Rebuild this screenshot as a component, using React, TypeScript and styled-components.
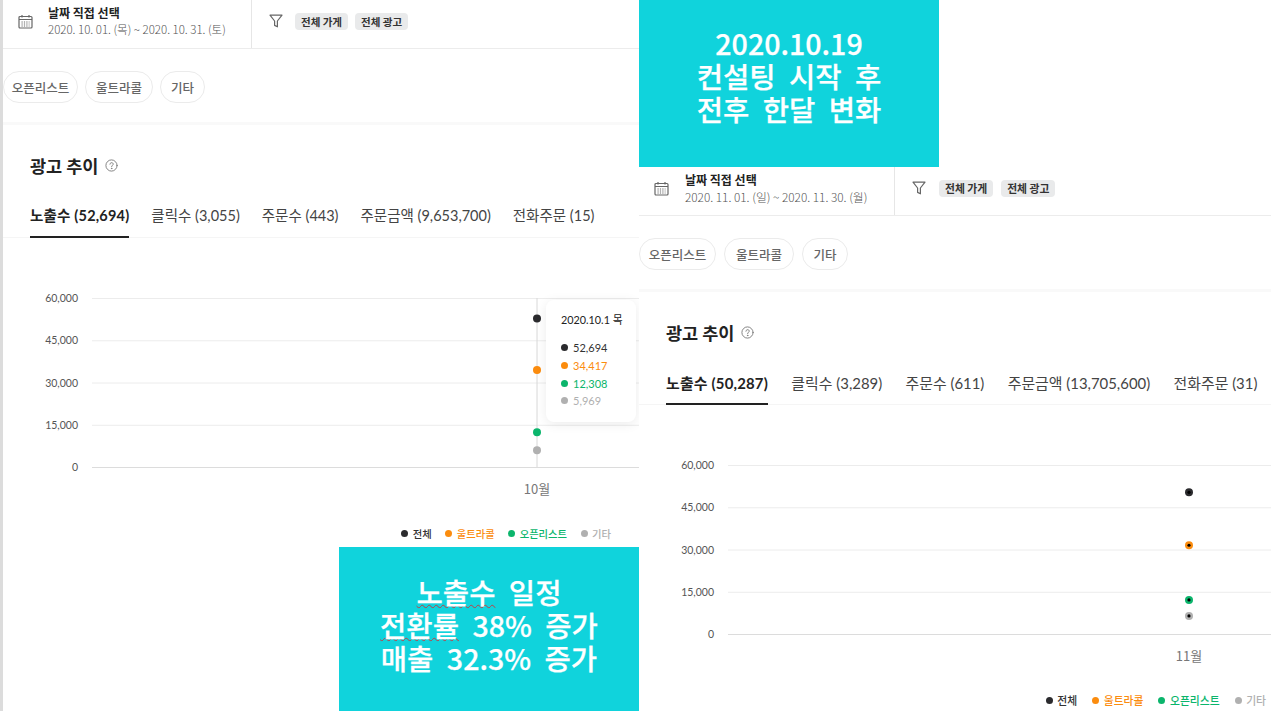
import styled, { createGlobalStyle } from 'styled-components';

const GlobalStyle = createGlobalStyle`
    html, body {
        margin: 0;
        padding: 0;
        background: #fff;
    }
    * {
        box-sizing: border-box;
    }
`;

const FONT = `Lato, "Noto Sans CJK KR", sans-serif`;
const KR = `"Noto Sans CJK KR", sans-serif`;

const BLACK = '#2b2b2e';
const ORANGE = '#fb8c0e';
const GREEN = '#0bb56c';
const GRAY = '#b0b0b0';

const Page = styled.div`
    display: flex;
    width: 1271px;
    height: 711px;
    overflow: hidden;
    background: #fff;
    font-family: ${FONT};
`;

const LeftColumn = styled.div`
    position: relative;
    flex: 0 0 639px;
    height: 711px;
    overflow: hidden;
    border-left: 3px solid #dcdcdc;
`;

const RightColumn = styled.div`
    flex: 1;
    min-width: 0;
    display: flex;
    flex-direction: column;
`;

const Callout = styled.div<{ $float?: boolean }>`
    ${(p) =>
        p.$float
            ? 'position: absolute; right: 0; bottom: 0; height: 164px; padding-bottom: 10px;'
            : 'flex: 0 0 167px; padding-bottom: 16px;'}
    width: 300px;
    display: flex;
    flex-direction: column;
    align-items: center;
    justify-content: center;
    background: #10d3dc;
    color: #fff;
    font-family: ${KR};
    font-size: 28.6px;
    font-weight: 500;
    -webkit-text-stroke: 0.25px #fff;
    line-height: 33px;
    word-spacing: 7px;
    white-space: nowrap;
`;

const Misspelt = styled.span`
    text-decoration: underline wavy #bd3f45 1px;
    text-underline-offset: 0;
    text-decoration-skip-ink: none;
`;

const Report = styled.section`
    color: #222;
`;

const HeaderBar = styled.div`
    display: flex;
    align-items: stretch;
    height: 49px;
    border-bottom: 1px solid #ececec;
`;

const DateBox = styled.div<{ $width: number }>`
    display: flex;
    align-items: center;
    flex: 0 0 ${(p) => p.$width}px;
    padding: 0 0 6px 15px;
    border-right: 1px solid #e6e6e6;
    color: #666;
`;

const DateText = styled.div<{ $inset: number }>`
    margin-left: ${(p) => p.$inset}px;
`;

const DateTitle = styled.div`
    font-family: ${KR};
    font-size: 12px;
    font-weight: 700;
    line-height: 16px;
    color: #222;
`;

const DateRange = styled.div<{ $size: number }>`
    font-family: ${KR};
    font-size: ${(p) => p.$size}px;
    font-weight: 300;
    line-height: 17px;
    color: #555;
    white-space: nowrap;
`;

const FilterBox = styled.div<{ $gap: number }>`
    display: flex;
    align-items: center;
    gap: ${(p) => p.$gap}px;
    padding: 0 0 6px 17px;
    color: #666;
    svg {
        margin-right: 5px;
    }
`;

const Badge = styled.span<{ $size: number }>`
    display: inline-flex;
    align-items: center;
    height: 17px;
    padding: 0 6px;
    border-radius: 4px;
    background: #e9eaeb;
    font-family: ${KR};
    font-size: ${(p) => p.$size}px;
    font-weight: 700;
    color: #333;
    white-space: nowrap;
`;

const ChipRow = styled.div<{ $gap: number }>`
    display: flex;
    gap: ${(p) => p.$gap}px;
    height: 76px;
    padding-top: 22px;
    border-bottom: 3px solid #f9f9f9;
`;

const Chip = styled.span<{ $width: number }>`
    display: inline-flex;
    align-items: center;
    justify-content: center;
    width: ${(p) => p.$width}px;
    height: 32px;
    border: 1px solid #ebebeb;
    border-radius: 16px;
    font-family: ${KR};
    font-size: 12.5px;
    font-weight: 500;
    color: #666;
`;

const TitleRow = styled.div`
    display: flex;
    align-items: center;
    gap: 7px;
    height: 24px;
    margin: 28px 0 19px 27px;
    font-family: ${KR};
    font-size: 17.5px;
    font-weight: 700;
    color: #222;
    svg {
        color: #777;
    }
`;

const TabRow = styled.div<{ $gap: number }>`
    display: flex;
    gap: ${(p) => p.$gap}px;
    height: 42px;
    padding-left: 27px;
    border-bottom: 1px solid #f5f5f5;
`;

const Tab = styled.div<{ $active?: boolean; $size: number }>`
    height: 42px;
    padding-top: 10px;
    line-height: 20px;
    font-size: ${(p) => p.$size}px;
    font-weight: ${(p) => (p.$active ? 700 : 400)};
    letter-spacing: ${(p) => (p.$active ? '0.2px' : '0')};
    color: ${(p) => (p.$active ? '#222' : '#444')};
    border-bottom: ${(p) => (p.$active ? '2px solid #222' : 'none')};
    white-space: nowrap;
`;

const ChartWrap = styled.div`
    position: relative;
    height: 283px;
`;

const AxisText = styled.text`
    font-family: ${FONT};
    font-size: 10.5px;
    fill: #555;
`;

const MonthText = styled.text`
    font-family: ${KR};
    font-size: 13px;
    fill: #777;
`;

const Tooltip = styled.div`
    position: absolute;
    left: 543px;
    top: 62px;
    width: 90px;
    height: 122px;
    padding: 12px 0 0 15px;
    border-radius: 8px;
    background: #fff;
    box-shadow: 0 2px 12px rgba(0, 0, 0, 0.08);
`;

const TooltipDate = styled.div`
    margin-bottom: 11px;
    font-family: ${FONT};
    font-size: 10.8px;
    line-height: 16px;
    color: #222;
`;

const TooltipRow = styled.div<{ $color: string }>`
    display: flex;
    align-items: center;
    gap: 5px;
    height: 17.7px;
    font-size: 11px;
    color: ${(p) => (p.$color === BLACK ? '#333' : p.$color)};
`;

const Dot = styled.i<{ $color: string }>`
    flex: none;
    width: 7px;
    height: 7px;
    border-radius: 50%;
    background: ${(p) => p.$color};
`;

const Legend = styled.div<{ $right: number; $gap: number }>`
    display: flex;
    justify-content: flex-end;
    gap: ${(p) => p.$gap}px;
    margin-top: 5px;
    padding-right: ${(p) => p.$right}px;
`;

const LegendItem = styled.span<{ $color: string; $size: number }>`
    display: inline-flex;
    align-items: center;
    gap: 4.5px;
    height: 14px;
    font-family: ${KR};
    font-size: ${(p) => p.$size}px;
    font-weight: 500;
    color: ${(p) => (p.$color === BLACK ? '#333' : p.$color)};
`;

const CalendarIcon = () => (
    <svg width="15" height="15" viewBox="0 0 15 15" fill="none" stroke="currentColor">
        <rect x="1" y="2.5" width="13" height="11.5" rx="1" strokeWidth="1.2" />
        <path d="M1 5.5h13M4 1v2.5M11 1v2.5" strokeWidth="1.2" />
        <path d="M3.5 8h8M3.5 10h8M3.5 12h8" strokeWidth="1" strokeDasharray="1.2 1.2" />
    </svg>
);

const FunnelIcon = () => (
    <svg width="14" height="14" viewBox="0 0 14 14" fill="none" stroke="currentColor" strokeWidth="1.2" strokeLinejoin="round">
        <path d="M1 1.2h12L8.4 7v5.8L5.6 11.4V7z" />
    </svg>
);

const HelpIcon = () => (
    <svg width="13" height="13" viewBox="0 0 13 13" fill="none" stroke="currentColor" strokeWidth="0.9" strokeLinecap="round">
        <circle cx="6.5" cy="6.5" r="5.6" />
        <path d="M4.9 5.2c0-2.1 3.3-2.1 3.3-.1 0 1.2-1.6 1.3-1.6 2.5" />
        <circle cx="6.6" cy="9.4" r="0.3" />
    </svg>
);

type ReportProps = {
    range: string;
    dateWidth: number;
    dateInset: number;
    dateSize: number;
    badgeSize: number;
    badgeGap: number;
    chipWidths: number[];
    chipGap: number;
    tabs: string[];
    tabSize: number;
    tabGap: number;
    month: string;
    pointX: number;
    values: number[];
    legendRight: number;
    legendGap: number;
    legendSize: number;
    hover?: boolean;
};

const seriesColors = [BLACK, ORANGE, GREEN, GRAY];
const seriesNames = ['전체', '울트라콜', '오픈리스트', '기타'];
const axis = [60000, 45000, 30000, 15000, 0];

const yOf = (v: number) => 229 - (v / 60000) * 169;

const AdReport = (props: ReportProps) => {
    const chips = ['오픈리스트', '울트라콜', '기타'];
    return (
        <Report>
            <HeaderBar>
                <DateBox $width={props.dateWidth}>
                    <CalendarIcon />
                    <DateText $inset={props.dateInset}>
                        <DateTitle>날짜 직접 선택</DateTitle>
                        <DateRange $size={props.dateSize}>{props.range}</DateRange>
                    </DateText>
                </DateBox>
                <FilterBox $gap={props.badgeGap}>
                    <FunnelIcon />
                    <Badge $size={props.badgeSize}>전체 가게</Badge>
                    <Badge $size={props.badgeSize}>전체 광고</Badge>
                </FilterBox>
            </HeaderBar>
            <ChipRow $gap={props.chipGap}>
                {chips.map((c, i) => (
                    <Chip key={c} $width={props.chipWidths[i]}>{c}</Chip>
                ))}
            </ChipRow>
            <TitleRow>
                광고 추이 <HelpIcon />
            </TitleRow>
            <TabRow $gap={props.tabGap}>
                {props.tabs.map((t, i) => (
                    <Tab key={t} $active={i === 0} $size={props.tabSize}>{t}</Tab>
                ))}
            </TabRow>
            <ChartWrap>
                <svg width="640" height="283">
                    {axis.map((v) => (
                        <g key={v}>
                            <line
                                x1="89"
                                x2="640"
                                y1={yOf(v) + 0.5}
                                y2={yOf(v) + 0.5}
                                stroke={v === 0 ? '#dcdcdc' : '#ececec'}
                            />
                            <AxisText x="75" y={yOf(v) + 4} textAnchor="end">
                                {v.toLocaleString('en-US')}
                            </AxisText>
                        </g>
                    ))}
                    {props.hover && (
                        <line x1={props.pointX} x2={props.pointX} y1="60" y2="229" stroke="#d8d8d8" />
                    )}
                    {props.values.map((v, i) => (
                        <g key={i}>
                            <circle cx={props.pointX} cy={yOf(v)} r="4" fill={seriesColors[i]} />
                            {!props.hover && <circle cx={props.pointX} cy={yOf(v)} r="1.6" fill="#000" />}
                        </g>
                    ))}
                    <MonthText x={props.pointX} y="256" textAnchor="middle">{props.month}</MonthText>
                </svg>
                {props.hover && (
                    <Tooltip>
                        <TooltipDate>2020.10.1 목</TooltipDate>
                        {props.values.map((v, i) => (
                            <TooltipRow key={i} $color={seriesColors[i]}>
                                <Dot $color={seriesColors[i]} />
                                {v.toLocaleString('en-US')}
                            </TooltipRow>
                        ))}
                    </Tooltip>
                )}
            </ChartWrap>
            <Legend $right={props.legendRight} $gap={props.legendGap}>
                {seriesNames.map((n, i) => (
                    <LegendItem key={n} $color={seriesColors[i]} $size={props.legendSize}>
                        <Dot $color={seriesColors[i]} />
                        {n}
                    </LegendItem>
                ))}
            </Legend>
        </Report>
    );
};

const App = () => {
    return (
        <Page>
            <GlobalStyle />
            <LeftColumn>
                <AdReport
                    range="2020. 10. 01. (목) ~ 2020. 10. 31. (토)"
                    dateWidth={249}
                    dateInset={15}
                    dateSize={11.5}
                    badgeSize={10.5}
                    badgeGap={7}
                    chipWidths={[75, 68, 45]}
                    chipGap={7}
                    tabs={['노출수 (52,694)', '클릭수 (3,055)', '주문수 (443)', '주문금액 (9,653,700)', '전화주문 (15)']}
                    tabSize={14.5}
                    tabGap={22}
                    month="10월"
                    pointX={534}
                    values={[52694, 34417, 12308, 5969]}
                    legendRight={28}
                    legendGap={13.5}
                    legendSize={10.3}
                    hover
                />
                <Callout $float>
                    <div><Misspelt>노출수</Misspelt> 일정</div>
                    <div><Misspelt>전환률</Misspelt> 38% 증가</div>
                    <div>매출 32.3% 증가</div>
                </Callout>
            </LeftColumn>
            <RightColumn>
                <Callout>
                    <div>2020.10.19</div>
                    <div>컨설팅 시작 후</div>
                    <div>전후 한달 변화</div>
                </Callout>
                <AdReport
                    range="2020. 11. 01. (일) ~ 2020. 11. 30. (월)"
                    dateWidth={256}
                    dateInset={16}
                    dateSize={11.8}
                    badgeSize={10.8}
                    badgeGap={8}
                    chipWidths={[77, 70, 46]}
                    chipGap={8}
                    tabs={['노출수 (50,287)', '클릭수 (3,289)', '주문수 (611)', '주문금액 (13,705,600)', '전화주문 (31)']}
                    tabSize={14.9}
                    tabGap={23.4}
                    month="11월"
                    pointX={550}
                    values={[50287, 31500, 12100, 6400]}
                    legendRight={5}
                    legendGap={15}
                    legendSize={10.8}
                />
            </RightColumn>
        </Page>
    );
};

export default App;
